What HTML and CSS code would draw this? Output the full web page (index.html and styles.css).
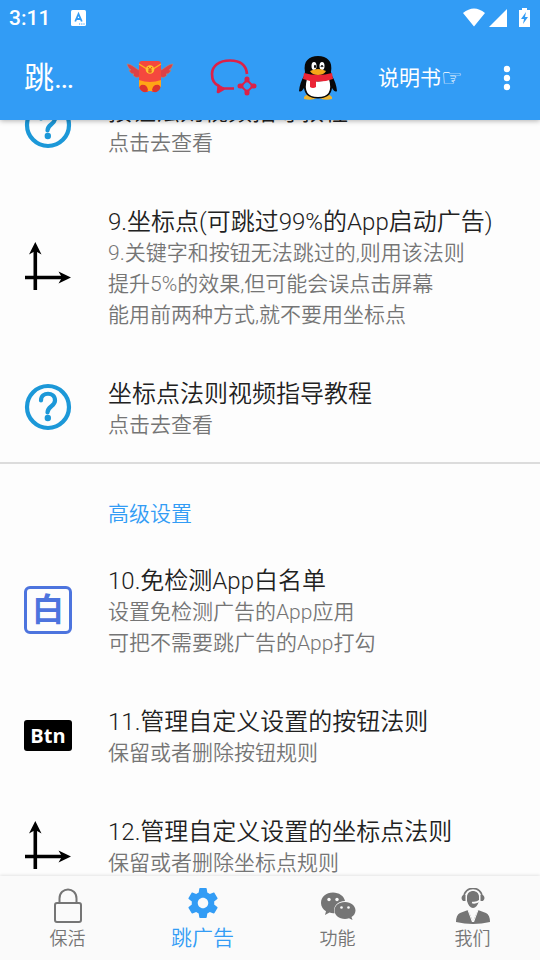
FILE: index.html
```html
<!DOCTYPE html>
<html lang="zh-CN">
<head>
    <meta charset="UTF-8">
    <meta name="viewport" content="width=device-width, initial-scale=1.0">
    <title>跳广告</title>
    <link rel="stylesheet" href="styles.css">
</head>
<body>
    <svg class="defs" width="0" height="0" aria-hidden="true">
        <symbol id="icon-help" viewBox="0 0 48 48">
            <circle cx="24" cy="24" r="21" fill="none" stroke="#1c98d8" stroke-width="4.200"/>
            <path d="M17 17.500C17 8.500 31 8.500 31 17.500C31 23.500 23.500 23 23.500 29.500" fill="none" stroke="#1c98d8" stroke-width="4.200" stroke-linecap="round"/>
            <circle cx="23.800" cy="35" r="3.200" fill="#1c98d8"/>
        </symbol>
        <symbol id="icon-axes" viewBox="0 0 48 48">
            <path d="M11.300 48V7M1 35.500H42" fill="none" stroke="#000" stroke-width="3.600"/>
            <path d="M11.300 0L17.500 12.500L11.300 9L5 12.500ZM47 35.500L34.500 41.500L38 35.500L34.500 29.500Z"/>
        </symbol>
    </svg>

    <header>
        <div class="status">
            <span>3:11</span>
            <svg class="status-app" width="16" height="16" viewBox="0 0 16 16">
                <rect x="0" y="0" width="15" height="16" rx="1.500" fill="#fff"/>
                <path d="M4.200 11.500L7.500 4L10.800 11.500M5.500 9H9.500" fill="none" stroke="#329cf5" stroke-width="1.800"/>
                <path d="M8 14H9.200M10.200 14H11.400M12.400 14H13.600" stroke="#329cf5" stroke-width="1.200"/>
            </svg>
            <svg class="status-right" width="70" height="22" viewBox="0 0 70 22" fill="#fff">
                <path d="M2 6Q13 -3 24 6L13 19.500ZM46 2V20H28ZM61 1H66V3H69V20H58V3H61Z"/>
                <path d="M65 5L60 12H63L62 17L67 10H64Z" fill="#329cf5"/>
            </svg>
        </div>
        <div class="toolbar">
            <h1>跳…</h1>
            <button class="tool" aria-label="红包">
                <svg width="48" height="34" viewBox="0 0 48 34">
                    <path d="M14 9C10 9 7 3 1 3C2 6 3 8 5 9L3 9C4 12 6 13 8 13L7 14C9 17 12 17 15 15ZM34 9C38 9 41 3 47 3C46 6 45 8 43 9L45 9C44 12 42 13 40 13L41 14C39 17 36 17 33 15Z" fill="#dc4148" stroke="#b88b72" stroke-width=".6"/>
                    <path d="M16 0H32Q35 0 35 3V24Q34 32 26 31L24 27L22 31Q13 32 13 24V3Q13 0 16 0Z" fill="#f5483e"/>
                    <path d="M13 19Q24 23 35 19V26Q30 23 27 30H21Q18 23 13 26Z" fill="#ffa516"/>
                    <path d="M15 24Q21 23 22 29Q20 33 16 30Q12 27 15 24ZM33 24Q27 23 26 29Q28 33 32 30Q36 27 33 24Z" fill="#dd332d"/>
                    <path d="M13 3L21 8H27L35 3" fill="none" stroke="#ffb31b" stroke-width="1.300"/>
                    <circle cx="24" cy="8.500" r="4.300" fill="#ffc32f"/>
                    <path d="M22 6L24 8.500L26 6M24 8V12M22 9H26M22 10.800H26" fill="none" stroke="#d74b1c" stroke-width=".9"/>
                </svg>
            </button>
            <button class="tool" aria-label="反馈">
                <svg width="48" height="38" viewBox="0 0 48 38" fill="none" stroke="#dc2148">
                    <path d="M37 15C36 5 29 1.500 20 1.500C9 1.500 2 7 2 15C2 21 4 25 9 27L8 33L14 29.500H24" stroke-width="2.700" stroke-linejoin="round"/>
                    <path d="M8 26L8 33L14 29Z" fill="#dc2148"/>
                    <path d="M37 21L43 27L37 33L31 27Z" stroke-width="1.900"/>
                    <path d="M37 20V21M43 27H44M37 33V34M30 27H31" stroke-width="5" stroke-linecap="round"/>
                </svg>
            </button>
            <button class="tool" aria-label="QQ">
                <svg width="40" height="46" viewBox="0 0 40 46">
                    <path d="M6 42Q8 39 13 40L19 43Q13 46 6 44ZM34 42Q32 39 27 40L21 43Q27 46 34 44Z" fill="#edb431"/>
                    <path d="M7 17C5 6 11 1 20 1S35 6 33 17L34 21Q38 27 39 36Q37 38 34 33Q33 43 20 43.500Q7 43 6 33Q3 38 1 36Q2 27 6 21Z" fill="#080808"/>
                    <path d="M9 24Q20 29 31 24Q36 42 20 42Q4 42 9 24Z" fill="#fff"/>
                    <ellipse cx="16" cy="11" rx="2.500" ry="4" fill="#fff"/>
                    <ellipse cx="24" cy="11" rx="2.500" ry="4" fill="#fff"/>
                    <ellipse cx="17" cy="11.500" rx="1" ry="1.800"/>
                    <path d="M23 12Q24 9 25 12" fill="none" stroke="#000" stroke-width="1.200"/>
                    <path d="M12 16Q20 12 28 16Q26 20 20 20T12 16Z" fill="#f5a719"/>
                    <path d="M6 18Q20 22 34 18L35 24Q27 27 18 26.500V32Q15 34 12 32V26L5 24Z" fill="#eb2435"/>
                </svg>
            </button>
            <button class="manual">说明书<span>☞</span></button>
            <button class="more" aria-label="更多">
                <svg width="8" height="26" viewBox="0 0 8 26" fill="#fff">
                    <circle cx="4" cy="4" r="3.200"/>
                    <circle cx="4" cy="13" r="3.200"/>
                    <circle cx="4" cy="22" r="3.200"/>
                </svg>
            </button>
        </div>
    </header>

    <main>
        <ul class="list">
            <li>
                <svg class="icon"><use href="#icon-help"/></svg>
                <div>
                    <h2>按钮法则视频指导教程</h2>
                    <p>点击去查看</p>
                </div>
            </li>
            <li>
                <svg class="icon"><use href="#icon-axes"/></svg>
                <div>
                    <h2>9.坐标点(可跳过99%的App启动广告)</h2>
                    <p>9.关键字和按钮无法跳过的,则用该法则<br>提升5%的效果,但可能会误点击屏幕<br>能用前两种方式,就不要用坐标点</p>
                </div>
            </li>
            <li>
                <svg class="icon"><use href="#icon-help"/></svg>
                <div>
                    <h2>坐标点法则视频指导教程</h2>
                    <p>点击去查看</p>
                </div>
            </li>
        </ul>

        <h3>高级设置</h3>
        <ul>
            <li>
                <span class="icon white">白</span>
                <div>
                    <h2>10.免检测App白名单</h2>
                    <p>设置免检测广告的App应用<br>可把不需要跳广告的App打勾</p>
                </div>
            </li>
            <li>
                <span class="icon btn">Btn</span>
                <div>
                    <h2>11.管理自定义设置的按钮法则</h2>
                    <p>保留或者删除按钮规则</p>
                </div>
            </li>
            <li>
                <svg class="icon"><use href="#icon-axes"/></svg>
                <div>
                    <h2>12.管理自定义设置的坐标点法则</h2>
                    <p>保留或者删除坐标点规则</p>
                </div>
            </li>
        </ul>
    </main>

    <nav>
        <a href="#keep">
            <svg width="36" height="36" viewBox="0 0 36 36" fill="none" stroke="#757575" stroke-width="2">
                <rect x="5" y="15" width="26" height="19" rx="2"/>
                <path d="M9.500 15V10.500C9.500 -1.500 26.500 -1.500 26.500 10.500V15"/>
            </svg>
            保活
        </a>
        <a href="#skip" class="active">
            <svg width="36" height="36" viewBox="0 0 24 24" fill="#329cf5">
                <path d="M19.430 12.980c.04-.32.07-.64.07-.98s-.03-.66-.07-.98l2.110-1.650c.19-.15.24-.42.12-.64l-2-3.460c-.12-.22-.39-.3-.61-.22l-2.490 1c-.52-.4-1.080-.73-1.690-.98l-.38-2.650C14.460 2.180 14.250 2 14 2h-4c-.25 0-.46.18-.49.42l-.38 2.650c-.61.25-1.170.59-1.690.98l-2.490-1c-.23-.09-.49 0-.61.22l-2 3.460c-.13.22-.07.49.12.64l2.110 1.650c-.04.32-.07.65-.07.98s.03.66.07.98l-2.110 1.650c-.19.15-.24.42-.12.64l2 3.460c.12.22.39.3.61.22l2.490-1c.52.4 1.080.73 1.690.98l.38 2.650c.03.24.24.42.49.42h4c.25 0 .46-.18.49-.42l.38-2.650c.61-.25 1.170-.59 1.690-.98l2.490 1c.23.09.49 0 .61-.22l2-3.460c.12-.22.07-.49-.12-.64l-2.110-1.650zM12 15.500c-1.930 0-3.500-1.570-3.500-3.500s1.570-3.500 3.500-3.500 3.500 1.570 3.500 3.500-1.570 3.500-3.500 3.500z"/>
            </svg>
            跳广告
        </a>
        <a href="#tools">
            <svg width="36" height="36" viewBox="0 0 36 36" fill="#757575">
                <path d="M13 4.500C6 4.500 1 9 1 15C1 18.500 3 21.500 6 23.300L5 27L9.500 24.600Q12 25.500 14.500 25.200C12.500 18 18 13 25 13C24 8 19 4.500 13 4.500Z"/>
                <path d="M25 14C18.500 14 14.500 18 14.500 22.500S19 31 25 31Q27 31 29 30.300L32.500 32L31.500 29C34 27.500 35.500 25 35.500 22.500C35.500 18 31 14 25 14Z"/>
                <g fill="#fafafa">
                    <circle cx="9" cy="11.500" r="1.700"/>
                    <circle cx="17" cy="11.500" r="1.700"/>
                    <circle cx="21.500" cy="19.500" r="1.300"/>
                    <circle cx="28.500" cy="19.500" r="1.300"/>
                </g>
            </svg>
            功能
        </a>
        <a href="#about">
            <svg width="36" height="36" viewBox="0 0 36 36" fill="#757575">
                <path d="M9 9C9 -2.500 27 -2.500 27 9" fill="none" stroke="#757575" stroke-width="1.700"/>
                <path d="M8 7H10.500V13H8Q5 10 8 7ZM25.500 7H28Q31 10 28 13H25.500Z"/>
                <path d="M12 9C12 1 24 1 24 9V13Q22 20 18 20T12 13Z"/>
                <path d="M17 14.500Q21 15.500 25 12.500" fill="none" stroke="#fafafa" stroke-width="1.800"/>
                <path d="M13 22L18 33L23 22L31 25Q35 27 35 34Q18 38 1 34Q1 27 5 25Z"/>
                <path d="M13 22L17.500 34L16.800 25L16 23H20L19.200 25L18.500 34L23 22" fill="none" stroke="#fafafa" stroke-width="1"/>
            </svg>
            我们
        </a>
    </nav>
</body>
</html>
```

FILE: styles.css
```css
* {
    box-sizing: border-box;
}

body {
    margin: 0;
    height: 100vh;
    display: flex;
    flex-direction: column;
    background-color: #fdfdfd;
    color: #212121;
    font-family: Roboto, "Noto Sans CJK SC", sans-serif;
    font-weight: 350;
}

.defs {
    position: absolute;
}

h1, h2, h3, p, ul {
    margin: 0;
    padding: 0;
    font-weight: inherit;
}

button {
    padding: 0;
    border: none;
    background: none;
    color: inherit;
    font-family: inherit;
    font-weight: inherit;
    cursor: pointer;
}

svg {
    display: block;
}

header {
    position: relative;
    flex: none;
    background-color: #329cf5;
    color: #fff;
    box-shadow: 0 1px 5px rgba(0, 0, 0, 0.3);
}

.status {
    display: flex;
    align-items: center;
    height: 36px;
    padding: 0 9px;
    font-size: 21px;
    font-weight: 500;
}

.status-app {
    margin-left: 21px;
}

.status-right {
    margin-left: auto;
}

.toolbar {
    display: flex;
    align-items: center;
    height: 84px;
    padding: 0 29px 0 24px;
    font-weight: 400;
}

h1 {
    width: 84px;
    font-size: 30px;
    line-height: 40px;
    white-space: nowrap;
}

.tool {
    display: flex;
    justify-content: center;
    width: 84px;
}

.manual {
    display: flex;
    align-items: center;
    margin-left: 18px;
    font-size: 21px;
    line-height: 32px;
    white-space: nowrap;
}

.manual span {
    font-family: "DejaVu Sans", sans-serif;
    font-size: 24px;
}

.more {
    margin-left: auto;
}

main {
    flex: 1;
    min-height: 0;
    overflow: hidden;
}

/* list is scrolled under the toolbar */
.list {
    margin-top: -48px;
}

li {
    display: flex;
    align-items: center;
    gap: 36px;
    padding: 24px 24px 23px;
}

.list li:last-child {
    padding-bottom: 21px;
}

.icon {
    flex: none;
    width: 48px;
    height: 48px;
    margin-bottom: 5px;
}

.white {
    border: 3px solid #4d74de;
    border-radius: 6px;
    color: #4d74de;
    font-size: 32px;
    font-weight: bold;
    line-height: 42px;
    text-align: center;
}

.btn {
    height: 31px;
    border-radius: 3px;
    background-color: #000;
    color: #fff;
    font-family: "Open Sans", sans-serif;
    font-size: 20px;
    font-weight: bold;
    line-height: 31px;
    text-align: center;
}

h2 {
    font-size: 24px;
    line-height: 32px;
    white-space: nowrap;
}

p {
    color: #757575;
    font-size: 21px;
    line-height: 31px;
    white-space: nowrap;
}

h3 {
    padding: 34px 24px 11px 108px;
    border-top: 2px solid #dcdcdc;
    color: #329cf5;
    font-size: 21px;
    line-height: 32px;
}

nav {
    position: relative;
    flex: none;
    display: flex;
    height: 84px;
    background-color: #fafafa;
    box-shadow: 0 -1px 3px rgba(0, 0, 0, 0.1);
}

nav a {
    flex: 1;
    display: flex;
    flex-direction: column;
    align-items: center;
    padding-top: 12px;
    color: #757575;
    font-size: 18px;
    line-height: 30px;
    text-decoration: none;
}

nav .active {
    padding-top: 9px;
    color: #329cf5;
    font-size: 21px;
    line-height: 34px;
}
```
